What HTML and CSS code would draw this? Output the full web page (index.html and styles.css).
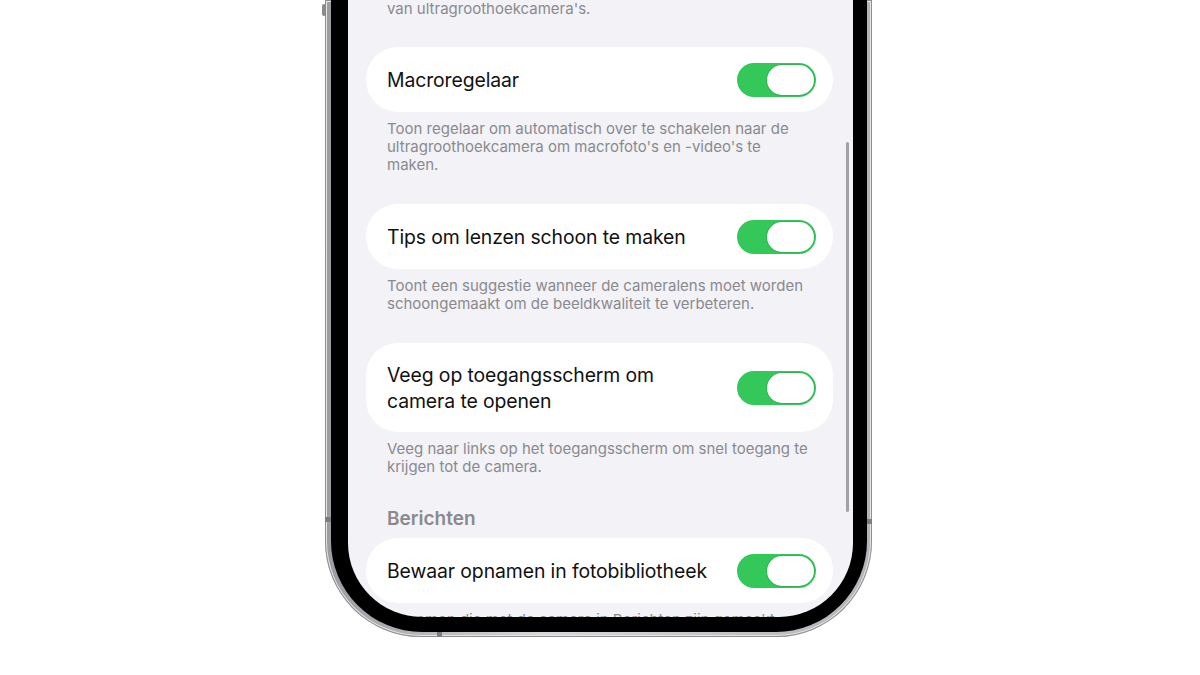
FILE: index.html
```html
<!DOCTYPE html>
<html>
<head>
    <meta charset="utf-8" />
    <title>Camera-instellingen</title>
    <link rel="stylesheet" href="styles.css">
</head>
<body>
    <div class="stage">
        <div class="phone">
            <span class="band band-left"></span>
            <span class="band band-right"></span>
            <span class="band band-bottom"></span>
            <span class="side-button"></span>
            <div class="bezel">
                <div class="screen">
                    <div class="scrollbar"></div>

                    <p class="footer first">van ultragroothoekcamera's.</p>

                    <div class="group">
                        <div class="card">
                            <span class="label">Macroregelaar</span>
                            <span class="toggle on"><span class="knob"></span></span>
                        </div>
                        <p class="footer">Toon regelaar om automatisch over te schakelen naar de ultragroothoekcamera om macrofoto's en -video's te maken.</p>
                    </div>

                    <div class="group">
                        <div class="card">
                            <span class="label">Tips om lenzen schoon te maken</span>
                            <span class="toggle on"><span class="knob"></span></span>
                        </div>
                        <p class="footer">Toont een suggestie wanneer de cameralens moet worden schoongemaakt om de beeldkwaliteit te verbeteren.</p>
                    </div>

                    <div class="group">
                        <div class="card tall">
                            <span class="label">Veeg op toegangsscherm om camera te openen</span>
                            <span class="toggle on"><span class="knob"></span></span>
                        </div>
                        <p class="footer">Veeg naar links op het toegangsscherm om snel toegang te krijgen tot de camera.</p>
                    </div>

                    <div class="group">
                        <h2 class="section-head">Berichten</h2>
                        <div class="card">
                            <span class="label">Bewaar opnamen in fotobibliotheek</span>
                            <span class="toggle on"><span class="knob"></span></span>
                        </div>
                        <p class="footer">Opnamen die met de camera in Berichten zijn gemaakt, worden bewaard.</p>
                    </div>
                </div>
            </div>
        </div>
    </div>
</body>
</html>
```

FILE: styles.css
```css
html, body {
    margin: 0;
    padding: 0;
    background: #fff;
}

body {
    width: 1200px;
    height: 675px;
    overflow: hidden;
    font-family: Inter, "Noto Sans", "DejaVu Sans", sans-serif;
}

.stage {
    display: flex;
    justify-content: center;
    padding-right: 3px;
}

/* phone frame */
.phone {
    position: relative;
    width: 547px;
    box-sizing: border-box;
    padding: 0 5px 5px 6px;
    background: linear-gradient(90deg, #9c9ca0, #d8d8da 40%, #b4b4b8);
    border-radius: 0 0 96px 96px;
    box-shadow: inset 0 0 0 1px #8e8e92, inset 0 0 0 2px #e4e4e6;
}

.bezel {
    background: #000;
    padding: 0 14px 15px 17px;
    border-radius: 0 0 91px 91px;
}

.screen {
    position: relative;
    height: 617px;
    overflow: hidden;
    background: #f2f2f7;
    border-radius: 0 0 74px 74px;
    padding: 0 20px 0 18px;
}

.band {
    position: absolute;
    background: #7d7d80;
}

.band-left {
    left: 0;
    top: 517px;
    width: 6px;
    height: 5px;
}

.band-right {
    right: 0;
    top: 519px;
    width: 5px;
    height: 5px;
}

.band-bottom {
    left: 112px;
    bottom: 0;
    width: 5px;
    height: 5px;
}

.side-button {
    position: absolute;
    left: -3px;
    top: 4px;
    width: 4px;
    height: 12px;
    background: #8a8a8e;
    border-radius: 2px;
}

.scrollbar {
    position: absolute;
    right: 4px;
    top: 142px;
    width: 3px;
    height: 370px;
    border-radius: 2px;
    background: #a2a2a6;
}

/* settings list */
.group {
    margin-top: 30px;
}

.group:nth-child(3) {
    margin-top: 29px;
}

.card {
    display: flex;
    align-items: center;
    gap: 12px;
    height: 65px;
    box-sizing: border-box;
    padding: 0 17px 0 21px;
    background: #fff;
    border-radius: 32px;
}

.card.tall {
    height: 89px;
}

.label {
    flex: 1;
    font-size: 19.4px;
    line-height: 26px;
    color: #111;
    letter-spacing: -0.1px;
}

.card.tall .label {
    padding-right: 30px;
}

.footer {
    margin: 8px 0 0 0;
    padding: 0 20px 0 21px;
    font-size: 15px;
    line-height: 18px;
    color: #8a8a8e;
}

.footer.first {
    margin-top: 0;
}

.section-head {
    margin: 0 0 6px 0;
    padding: 0 21px;
    font-size: 19px;
    line-height: 26px;
    font-weight: 600;
    color: #8a8a8e;
}

/* switch */
.toggle {
    display: flex;
    justify-content: flex-end;
    align-items: center;
    width: 79px;
    height: 34px;
    box-sizing: border-box;
    padding: 2px;
    border-radius: 17px;
    background: #ccc;
}

.toggle.on {
    background: #34c759;
}

.knob {
    width: 47px;
    height: 30px;
    border-radius: 15px;
    background: #fff;
    box-shadow: 0 0 0 1px rgba(40, 150, 70, 0.35);
}
```
